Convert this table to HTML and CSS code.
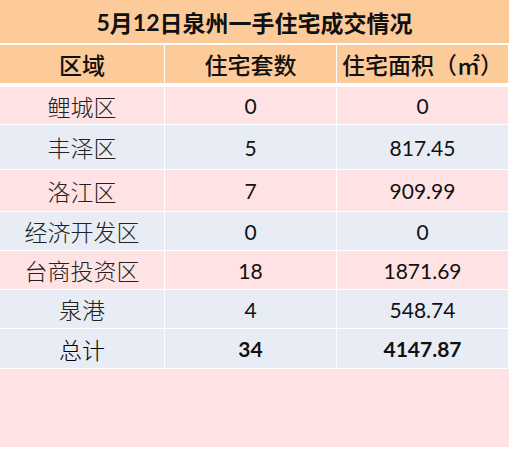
FILE: index.html
```html
<!DOCTYPE html>
<html lang="zh">
<head>
<meta charset="utf-8">
<link rel="stylesheet" href="styles.css">
</head>
<body>
<div class="sheet">
  <div class="title"><span class="num">5</span>月<span class="num">12</span>日泉州一手住宅成交情况</div>
  <div class="row head">
    <div class="cell">区域</div>
    <div class="cell">住宅套数</div>
    <div class="cell">住宅面积（㎡）</div>
  </div>
  <div class="row pink h37">
    <div class="cell zh">鲤城区</div>
    <div class="cell num">0</div>
    <div class="cell num">0</div>
  </div>
  <div class="row blue h44">
    <div class="cell zh">丰泽区</div>
    <div class="cell num">5</div>
    <div class="cell num">817.45</div>
  </div>
  <div class="row pink h41">
    <div class="cell zh">洛江区</div>
    <div class="cell num">7</div>
    <div class="cell num">909.99</div>
  </div>
  <div class="row blue h38">
    <div class="cell zh">经济开发区</div>
    <div class="cell num">0</div>
    <div class="cell num">0</div>
  </div>
  <div class="row pink h38">
    <div class="cell zh">台商投资区</div>
    <div class="cell num">18</div>
    <div class="cell num">1871.69</div>
  </div>
  <div class="row blue h38">
    <div class="cell zh">泉港</div>
    <div class="cell num">4</div>
    <div class="cell num">548.74</div>
  </div>
  <div class="row blue h39">
    <div class="cell zh total">总计</div>
    <div class="cell num bold">34</div>
    <div class="cell num bold">4147.87</div>
  </div>
  <div class="blank"></div>
</div>
</body>
</html>
```
FILE: styles.css
```css
html, body {
  margin: 0;
  padding: 0;
  background: #ffffff;
}
body {
  font-family: "Noto Sans CJK SC", sans-serif;
  color: #1a1a1a;
}
.sheet {
  width: 509px;
  display: flex;
  flex-direction: column;
}
.title {
  height: 43px;
  margin-bottom: 2px;
  background: #fccb99;
  display: flex;
  align-items: center;
  justify-content: center;
  font-size: 23px;
  font-weight: 700;
  color: #111;
}
.title .num {
  font-family: "Lato", "Noto Sans CJK SC", sans-serif;
  font-weight: 700;
}
.row {
  display: grid;
  grid-template-columns: 164px 171px 171px;
  column-gap: 1px;
  margin-bottom: 1px;
}
.row.head {
  height: 38px;
  margin-bottom: 4px;
}
.row.head .cell {
  background: #fccb99;
  font-size: 23px;
  font-weight: 500;
  color: #111;
}
.h37 { height: 37px; }
.h38 { height: 38px; }
.h39 { height: 39px; }
.h41 { height: 41px; }
.h44 { height: 44px; }
.cell {
  display: flex;
  align-items: center;
  justify-content: center;
  white-space: nowrap;
}
.pink .cell { background: #ffe3e4; }
.blue .cell { background: #e8ecf4; }
.zh {
  font-size: 23px;
  font-weight: 300;
  color: #222;
}
.zh.total {
  color: #000;
}
.cell.num {
  font-family: "Lato", "Noto Sans CJK SC", sans-serif;
  font-size: 21px;
  color: #111;
}
.cell.num.bold {
  font-weight: 700;
}
.blank {
  height: 78px;
  background: #ffe3e4;
}
```
